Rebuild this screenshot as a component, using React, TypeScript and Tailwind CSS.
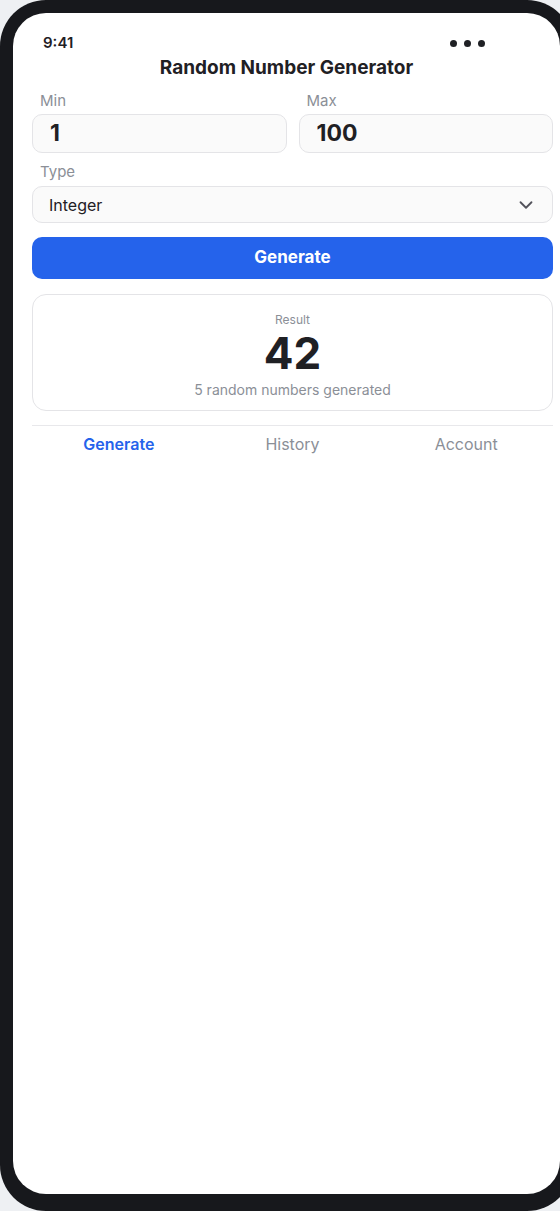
import React from "react";

const font = { fontFamily: "Inter, 'Noto Sans', sans-serif" };

function ChevronDown() {
  return (
    <svg width="22" height="22" viewBox="0 0 24 24" fill="none" stroke="#52525b" strokeWidth="2" strokeLinecap="round" strokeLinejoin="round">
      <path d="m6 9 6 6 6-6" />
    </svg>
  );
}

export default function App() {
  return (
    <div className="w-[560px] h-[1211px] overflow-hidden bg-[#eef0f3]" style={font}>
      <div className="w-[573px] h-[1211px] rounded-[46px] bg-[#17181c] pt-[13px] pl-[13px] pr-[13px] pb-[17px]">
        <div className="w-full h-full bg-white rounded-[33px] flex flex-col">
          {/* status bar */}
          <div className="mt-[17px] h-[26px] flex items-center justify-between pl-[30px] pr-[75px]">
            <span className="text-[15px] font-semibold text-[#1f2024]">9:41</span>
            <div className="flex items-center gap-[7px]">
              <span className="w-[7px] h-[7px] rounded-full bg-[#1f2024]" />
              <span className="w-[7px] h-[7px] rounded-full bg-[#1f2024]" />
              <span className="w-[7px] h-[7px] rounded-full bg-[#1f2024]" />
            </div>
          </div>
          {/* title */}
          <div className="h-[24px] flex items-center justify-center">
            <h1 className="text-[19px] font-bold text-[#1f2024] leading-[24px]">Random Number Generator</h1>
          </div>
          <div className="pl-[19px] pr-[7px] flex flex-col">
            <div className="mt-[11px] grid grid-cols-2 gap-[12px]">
              <div className="flex flex-col">
                <label className="h-[20px] leading-[20px] text-[15px] text-[#8b8f97] pl-[8px]">Min</label>
                <div className="mt-[3px] h-[39px] rounded-[10px] border border-[#e4e4e7] bg-[#fafafa] flex items-center pl-[17px]">
                  <span className="text-[23px] font-bold text-[#1f2024]">1</span>
                </div>
              </div>
              <div className="flex flex-col">
                <label className="h-[20px] leading-[20px] text-[15px] text-[#8b8f97] pl-[8px]">Max</label>
                <div className="mt-[3px] h-[39px] rounded-[10px] border border-[#e4e4e7] bg-[#fafafa] flex items-center pl-[17px]">
                  <span className="text-[23px] font-bold text-[#1f2024]">100</span>
                </div>
              </div>
            </div>
            <label className="mt-[9px] h-[20px] leading-[20px] text-[15px] text-[#8b8f97] pl-[8px]">Type</label>
            <div className="mt-[4px] h-[37px] rounded-[10px] border border-[#e4e4e7] bg-[#fafafa] flex items-center justify-between pl-[16px] pr-[15px]">
              <span className="text-[16px] text-[#1f2024]">Integer</span>
              <ChevronDown />
            </div>
            <button className="mt-[14px] h-[42px] rounded-[10px] bg-[#2563eb] text-white text-[17px] font-bold flex items-center justify-center">
              Generate
            </button>
            <div className="mt-[15px] h-[117px] rounded-[14px] border border-[#e4e4e7] flex flex-col items-center pt-[17px]">
              <span className="text-[12px] leading-[16px] text-[#8b8f97]">Result</span>
              <span className="mt-[1px] text-[44px] leading-[48px] font-bold text-[#1f2024]">42</span>
              <span className="mt-[3px] text-[14px] leading-[20px] text-[#8b8f97]">5 random numbers generated</span>
            </div>
            <div className="mt-[14px] border-t border-[#e8e8eb] grid grid-cols-3 h-[36px] items-center">
              <span className="text-center text-[16px] font-semibold text-[#2563eb]">Generate</span>
              <span className="text-center text-[16px] text-[#8b8f97]">History</span>
              <span className="text-center text-[16px] text-[#8b8f97]">Account</span>
            </div>
          </div>
        </div>
      </div>
    </div>
  );
}
